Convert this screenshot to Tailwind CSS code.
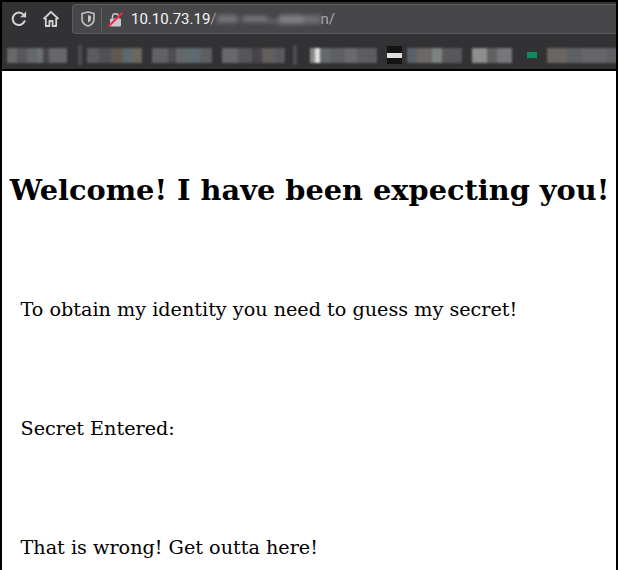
<!DOCTYPE html>
<html lang="en">
<head>
  <meta charset="UTF-8">
  <meta name="viewport" content="width=device-width, initial-scale=1">
  <title>Welcome</title>
  <script src="https://cdn.jsdelivr.net/npm/@tailwindcss/browser@4"></script>
</head>
<body class="bg-white overflow-hidden">
  <div class="w-[618px] h-[570px] border-2 border-b-0 border-black flex flex-col overflow-hidden">
    <!-- toolbar -->
    <div class="h-[33px] bg-[#323234] flex items-center shrink-0 pt-[1px]">
      <svg class="w-[18px] h-[18px] ml-[8px] shrink-0" viewBox="0 0 18 18" fill="none" stroke="#d4d4d6" stroke-width="2" stroke-linecap="round">
        <path d="M14.6 11.2A6.2 6.2 0 1 1 13.6 4.8L15.2 6.4"/>
        <path d="M15.6 2.2V6.8H11" fill="#d4d4d6" stroke-width="1"/>
      </svg>
      <svg class="w-[18px] h-[18px] ml-[14px] shrink-0" viewBox="0 0 18 18" fill="none" stroke="#d4d4d6" stroke-width="1.8" stroke-linejoin="round">
        <path d="M1.5 9 9 1.8 16.5 9"/>
        <path d="M3.8 8V16H7.4V11H10.6V16H14.2V8"/>
      </svg>
      <div class="ml-[12px] flex-1 h-[30px] bg-[#47474a] border border-r-0 border-[#5c5c5f] rounded-l-[4px] flex items-center">
        <svg class="w-[14px] h-[16px] ml-[8px] shrink-0" viewBox="0 0 14 16" fill="none" stroke="#c2c2c4" stroke-width="1.6" stroke-linejoin="round">
          <path d="M7 1 13 2.6V8C13 11.6 10 14 7 15 4 14 1 11.6 1 8V2.6Z"/>
          <path d="M7 4 10 5V8C10 9.8 8.6 11 7 11.6Z" fill="#c2c2c4" stroke="none"/>
        </svg>
        <div class="w-px h-[24px] bg-[#626265] ml-[6px]"></div>
        <svg class="w-[15px] h-[15px] ml-[6px] shrink-0" viewBox="0 0 15 15" fill="none">
          <path d="M4.5 6.5V4.8A3 3 0 0 1 10.5 4.8V6.5" stroke="#c9c9cb" stroke-width="1.4"/>
          <rect x="2" y="6.5" width="11" height="8" rx="1" fill="#c9c9cb"/>
          <path d="M0.5 14.5 14.5 0.5" stroke="#f0284f" stroke-width="2"/>
        </svg>
        <span class="ml-[8px] font-['Roboto',sans-serif] text-[15px] text-[#f4f4f5] whitespace-nowrap">10.10.73.19<span class="text-[#a0a0a4]">/</span></span>
        <div class="flex items-center blur-[2px] h-[10px] w-[104px]">
          <div class="w-[20px] h-[8px] bg-[#727276]"></div>
          <div class="w-[6px] h-[4px] bg-[#58585c]"></div>
          <div class="w-[24px] h-[6px] bg-[#77777b]"></div>
          <div class="w-[12px] h-[4px] mt-[4px] bg-[#66666a]"></div>
          <div class="w-[24px] h-[9px] bg-[#7f7f84]"></div>
          <div class="w-[18px] h-[9px] bg-[#6c6c70]"></div>
        </div>
        <span class="font-['Roboto',sans-serif] text-[15px] text-[#a9a9ad]">n/</span>
      </div>
    </div>
    <!-- bookmarks, blurred in the shot -->
    <div class="h-[36px] bg-[#323234] border-b-2 border-black flex items-center shrink-0 pt-[6px] overflow-hidden">
      <div class="ml-[5px] w-[60px] h-[15px] flex shrink-0 blur-[1px]">
        <div class="w-[10px] bg-[#68686b]"></div><div class="w-[10px] bg-[#58585b]"></div><div class="w-[10px] bg-[#63686b]"></div><div class="w-[6px] bg-[#6d7074]"></div><div class="w-[6px] bg-[#46464c]"></div><div class="w-[18px] bg-[#67676a]"></div>
      </div>
      <div class="ml-[11px] w-[4px] h-[20px] bg-[#4e4e51] shrink-0 blur-[0.8px]"></div>
      <div class="ml-[5px] w-[55px] h-[15px] flex shrink-0 blur-[1px]">
        <div class="w-[12px] bg-[#5c5c5f]"></div><div class="w-[12px] bg-[#505055]"></div><div class="w-[12px] bg-[#5e5a52]"></div><div class="w-[8px] bg-[#5a6a72]"></div><div class="w-[11px] bg-[#6b6862]"></div>
      </div>
      <div class="ml-[10px] w-[60px] h-[15px] flex shrink-0 blur-[1px]">
        <div class="w-[16px] bg-[#626265]"></div><div class="w-[8px] bg-[#4e4e52]"></div><div class="w-[12px] bg-[#65686b]"></div><div class="w-[12px] bg-[#5d6a70]"></div><div class="w-[12px] bg-[#5f5f62]"></div>
      </div>
      <div class="ml-[10px] w-[63px] h-[15px] flex shrink-0 blur-[1px]">
        <div class="w-[16px] bg-[#68686b]"></div><div class="w-[14px] bg-[#55555a]"></div><div class="w-[10px] bg-[#46464a]"></div><div class="w-[13px] bg-[#625f5c]"></div><div class="w-[10px] bg-[#5a5a5e]"></div>
      </div>
      <div class="ml-[8px] w-[4px] h-[20px] bg-[#4e4e51] shrink-0 blur-[0.8px]"></div>
      <div class="ml-[13px] w-[67px] h-[15px] flex shrink-0 blur-[1px]">
        <div class="w-[5px] bg-[#8a8a8a]"></div><div class="w-[5px] bg-[#e2e2e2]"></div><div class="w-[10px] bg-[#66686c]"></div><div class="w-[15px] bg-[#5f6063]"></div><div class="w-[12px] bg-[#6a6a6c]"></div><div class="w-[20px] bg-[#5d5d61]"></div>
      </div>
      <div class="ml-[10px] w-[15px] h-[18px] bg-[#131313] flex items-center shrink-0 blur-[0.3px]">
        <div class="w-full h-[5px] bg-[#dedede]"></div>
      </div>
      <div class="ml-[5px] w-[55px] h-[15px] flex shrink-0 blur-[1px]">
        <div class="w-[10px] bg-[#5c6068]"></div><div class="w-[15px] bg-[#6b6866]"></div><div class="w-[10px] bg-[#7b8480]"></div><div class="w-[20px] bg-[#58585c]"></div>
      </div>
      <div class="ml-[10px] w-[40px] h-[15px] flex shrink-0 blur-[1px]">
        <div class="w-[15px] bg-[#8e8e8e]"></div><div class="w-[10px] bg-[#616164]"></div><div class="w-[15px] bg-[#77777a]"></div>
      </div>
      <div class="ml-[15px] w-[10px] h-[6px] bg-[#0f8a5c] shrink-0 blur-[0.5px]"></div>
      <div class="ml-[10px] flex-1 h-[15px] flex blur-[1px]">
        <div class="w-[20px] bg-[#6a6562]"></div><div class="w-[15px] bg-[#5c6064]"></div><div class="w-[25px] bg-[#66666a]"></div><div class="w-[30px] bg-[#5e5f62]"></div>
      </div>
    </div>
    <!-- page body -->
    <div class="flex-1 bg-white font-['DejaVu_Serif',serif] text-black">
      <h1 class="mt-[100px] ml-[1px] text-[28.8px] leading-[38px] font-bold text-center whitespace-nowrap">Welcome! I have been expecting you!</h1>
      <div class="pl-[18.5px] text-[19.2px] leading-[24px]">
        <p class="mt-[89px]">To obtain my identity you need to guess my secret!</p>
        <p class="mt-[95px]">Secret Entered:</p>
        <p class="mt-[95px]">That is wrong! Get outta here!</p>
      </div>
    </div>
  </div>
</body>
</html>
